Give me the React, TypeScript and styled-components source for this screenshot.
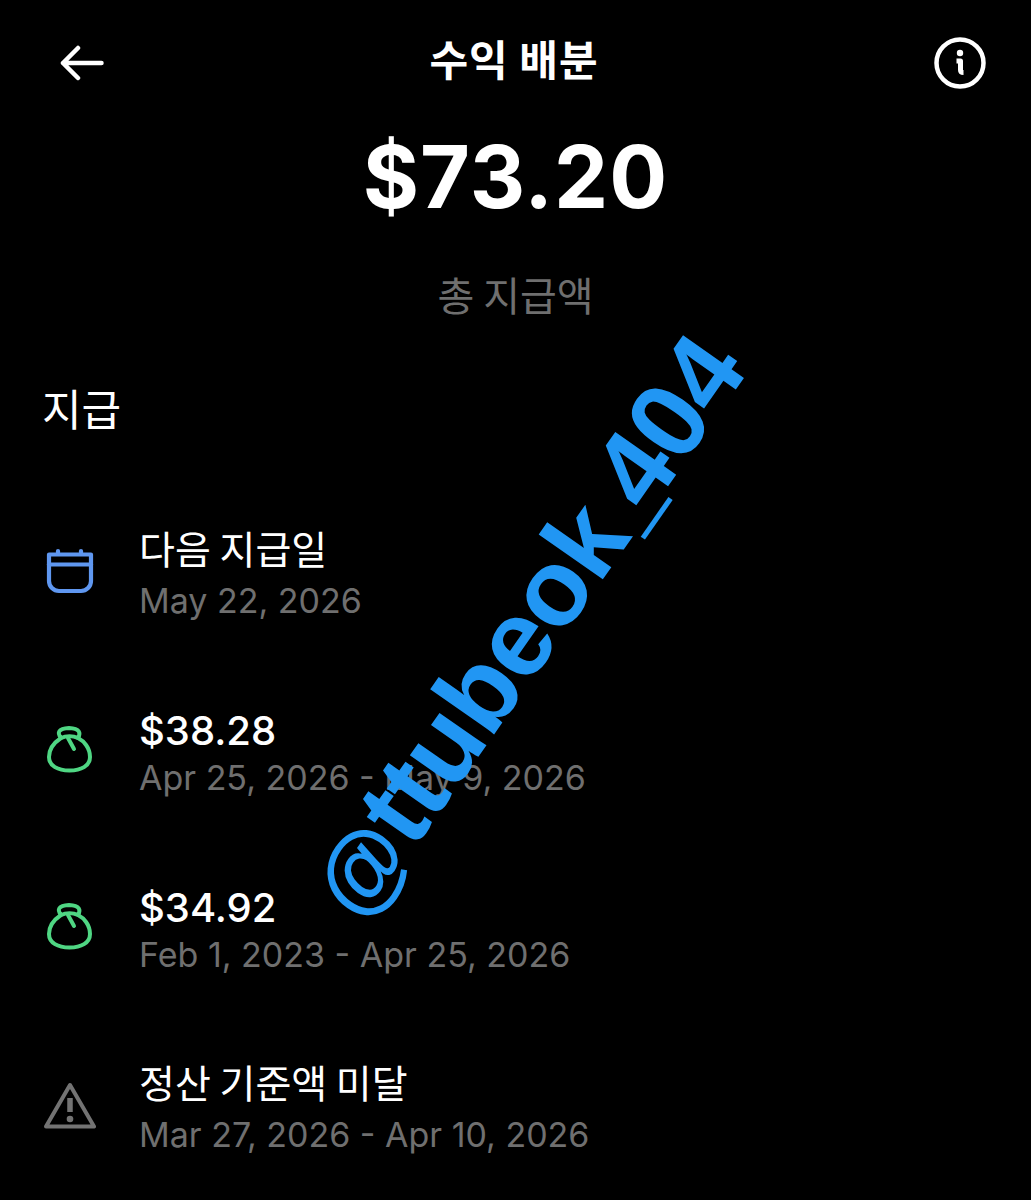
import React from "react";
import styled, { createGlobalStyle } from "styled-components";

const Global = createGlobalStyle`
  html, body { margin: 0; padding: 0; background: #000; }
  body { font-family: "Inter", "Noto Sans CJK KR", sans-serif; }
`;

const Page = styled.div`
  position: relative;
  width: 1031px;
  height: 1200px;
  overflow: hidden;
  background: #000;
  color: #fff;
  display: flex;
  flex-direction: column;
`;

const Header = styled.header`
  display: grid;
  grid-template-columns: 1fr auto 1fr;
  align-items: center;
  height: 60px;
  padding: 33px 45px 0 42px;
`;

const BackButton = styled.div`
  display: flex;
  justify-self: start;
  margin-left: 18px;
`;

const InfoButton = styled.div`
  display: flex;
  justify-self: end;
`;

const Title = styled.h1`
  margin: 0;
  font-family: "Noto Sans CJK KR", sans-serif;
  font-size: 42px;
  font-weight: 700;
  line-height: 54px;
  letter-spacing: 1px;
  transform: translateY(-5px);
`;

const Summary = styled.section`
  display: flex;
  flex-direction: column;
  align-items: center;
`;

const Amount = styled.div`
  margin-top: 38px;
  font-size: 86px;
  font-weight: 700;
  line-height: 92px;
  letter-spacing: 1px;
`;

const SummaryLabel = styled.div`
  margin-top: 47px;
  font-family: "Noto Sans CJK KR", sans-serif;
  font-size: 40px;
  line-height: 48px;
  color: #6f6f6f;
`;

const SectionTitle = styled.h2`
  margin: 61px 0 0 42px;
  font-family: "Noto Sans CJK KR", sans-serif;
  font-size: 43px;
  font-weight: 400;
  line-height: 56px;
`;

const List = styled.div`
  display: flex;
  flex-direction: column;
  margin-top: 90px;
  gap: 77px;
`;

const Row = styled.div`
  display: flex;
  align-items: center;
  height: 100px;
  &:last-child { margin-top: 3px; }
`;

const IconSlot = styled.div`
  flex: 0 0 139px;
  display: flex;
  justify-content: center;
  padding-bottom: 6px;
  box-sizing: border-box;
`;

const RowText = styled.div`
  display: flex;
  flex-direction: column;
`;

const RowTitle = styled.div<{ $korean?: boolean }>`
  font-family: ${(p) => (p.$korean ? '"Noto Sans CJK KR", sans-serif' : '"Inter", sans-serif')};
  font-size: ${(p) => (p.$korean ? 39 : 40)}px;
  font-weight: ${(p) => (p.$korean ? 400 : 500)};
  line-height: 52px;
  margin-top: ${(p) => (p.$korean ? -4 : 3)}px;
  margin-bottom: ${(p) => (p.$korean ? 4 : -3)}px;
`;

const RowMeta = styled.div`
  font-size: 34px;
  line-height: 48px;
  color: #6f6f6f;
  white-space: nowrap;
`;

const Watermark = styled.div`
  position: absolute;
  left: 525px;
  top: 626px;
  transform: translate(-50%, -50%) rotate(-55deg);
  font-family: "Liberation Sans", sans-serif;
  font-size: 108px;
  font-weight: 700;
  line-height: 1;
  letter-spacing: -1px;
  color: #2196f3;
  white-space: nowrap;
`;

const WatermarkAt = styled.span`
  font-size: 92px;
  letter-spacing: 0;
`;

const WatermarkBar = styled.span`
  display: inline-block;
  font-size: 84px;
  letter-spacing: -12px;
  margin-left: -8px;
  transform: translate(14px, -22px) scaleY(1.6);
`;

const CalendarIcon = () => (
  <svg width="48" height="48" viewBox="0 0 48 48" fill="none" stroke="#5f97f0" strokeWidth="4.200" strokeLinejoin="round" strokeLinecap="round">
    <path d="M3 6.500H45V33a10 10 0 0 1-10 10H13A10 10 0 0 1 3 33Z" />
    <path d="M3 16.500H45" />
    <path d="M12 3V6M35 3V6" />
  </svg>
);

const BagIcon = () => (
  <svg width="46" height="48" viewBox="0 0 46 48" fill="none" stroke="#4fd683" strokeWidth="4" strokeLinejoin="round" strokeLinecap="round">
    <path d="M14 13C8 17 2 23 2 32C2 41 11 45.500 22.500 45.500C34 45.500 43 41 43 32C43 23 37 16 31 13" />
    <path d="M14 13C10 8 11 3.500 22 3C33 3.500 34 8 31 13C26 10.500 19 10.500 14 13Z" />
    <path d="M21 13L27 24" />
  </svg>
);

const WarningIcon = () => (
  <svg width="52" height="48" viewBox="0 0 52 48" fill="none" stroke="#737373" strokeWidth="4" strokeLinejoin="round">
    <path d="M26 3L50 44.500H2Z" />
    <path d="M26 16V30" strokeWidth="5.500" />
    <circle cx="26" cy="37" r="3.300" fill="#737373" stroke="none" />
  </svg>
);

const rows = [
  { icon: <CalendarIcon />, title: "다음 지급일", korean: true, meta: "May 22, 2026" },
  { icon: <BagIcon />, title: "$38.28", korean: false, meta: "Apr 25, 2026 - May 9, 2026" },
  { icon: <BagIcon />, title: "$34.92", korean: false, meta: "Feb 1, 2023 - Apr 25, 2026" },
  { icon: <WarningIcon />, title: "정산 기준액 미달", korean: true, meta: "Mar 27, 2026 - Apr 10, 2026" },
];

export default function App() {
  return (
    <Page>
      <Global />
      <Header>
        <BackButton>
          <svg width="44" height="36" viewBox="0 0 44 36" fill="none" stroke="#fff" strokeWidth="4.500" strokeLinecap="round" strokeLinejoin="round">
            <path d="M41.500 18H3M18 3L3 18L18 33" />
          </svg>
        </BackButton>
        <Title>수익 배분</Title>
        <InfoButton>
          <svg width="52" height="52" viewBox="0 0 52 52" fill="none">
            <circle cx="26" cy="26" r="23.500" stroke="#fff" strokeWidth="4.500" />
            <circle cx="26" cy="16" r="3.200" fill="#fff" />
            <path d="M22.500 24H26.500V33C26.500 35 27.500 35.500 29.500 35.500" stroke="#fff" strokeWidth="5" strokeLinejoin="round" />
          </svg>
        </InfoButton>
      </Header>
      <Summary>
        <Amount>$73.20</Amount>
        <SummaryLabel>총 지급액</SummaryLabel>
      </Summary>
      <SectionTitle>지급</SectionTitle>
      <List>
        {rows.map((r) => (
          <Row key={r.meta}>
            <IconSlot>{r.icon}</IconSlot>
            <RowText>
              <RowTitle $korean={r.korean}>{r.title}</RowTitle>
              <RowMeta>{r.meta}</RowMeta>
            </RowText>
          </Row>
        ))}
      </List>
      <Watermark><WatermarkAt>@</WatermarkAt>ttubeok<WatermarkBar>_</WatermarkBar>404</Watermark>
    </Page>
  );
}
